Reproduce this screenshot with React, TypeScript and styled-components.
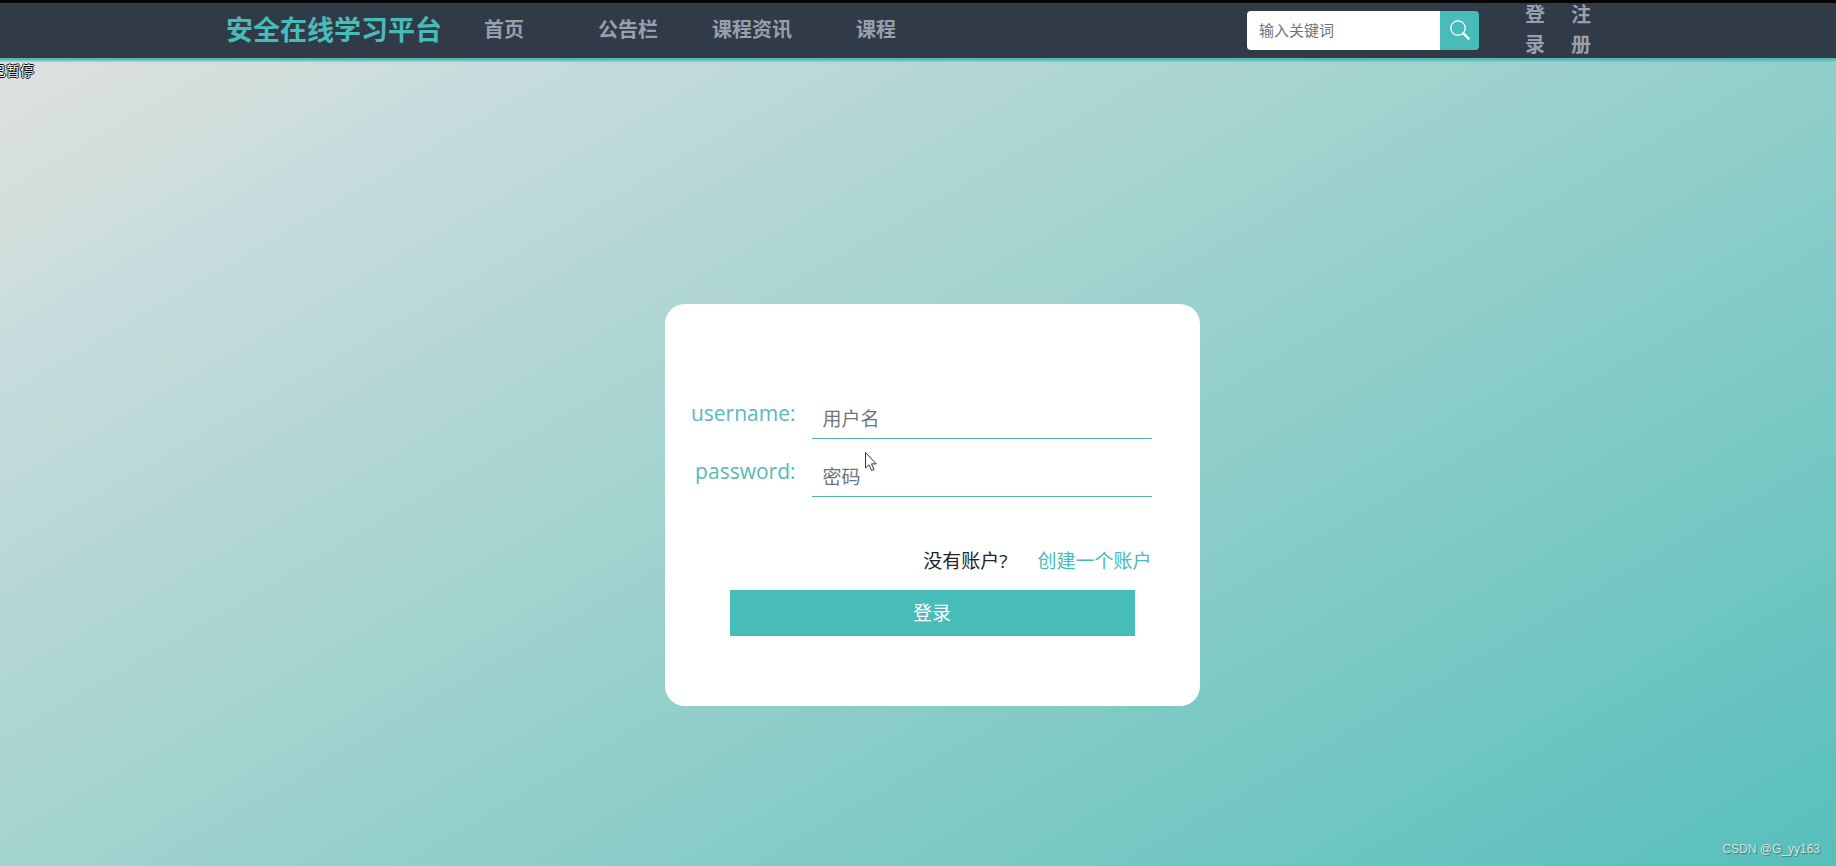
import React from "react";
import styled, { createGlobalStyle } from "styled-components";

const teal = "#48bcb9";

const GlobalStyle = createGlobalStyle`
  *, *::before, *::after { box-sizing: border-box; }
  body {
    margin: 0;
    color: #212529;
    font-family: "Open Sans", "Noto Sans CJK SC", sans-serif;
  }
  a { text-decoration: none; }
  input, button { font-family: inherit; border: 0; border-radius: 0; }
`;

const Page = styled.div`
  position: relative;
  display: flex;
  flex-direction: column;
  min-height: 100vh;
  overflow: hidden;
  background: linear-gradient(150deg, #e3e1de 0%, #cbdddb 16%, #c6dcdd 19%, #c0dad8 24%, #8fcec9 60%, #57bfbc 100%);
`;

const Header = styled.header`
  height: 60px;
  border-top: 3px solid #040404;
  border-bottom: 2px solid #5fb3b1;
  background: #313b47;
  box-shadow: 0 1px 2px ${teal};
`;

const HeaderInner = styled.div`
  display: flex;
  align-items: center;
  height: 100%;
  max-width: 1384px;
  margin: 0 auto;
  padding: 0 19px 1px 0;
`;

const Brand = styled.a`
  flex: none;
  color: ${teal};
  font-size: 27px;
  font-weight: 700;
  line-height: 36px;
`;

const Nav = styled.nav`
  display: grid;
  grid-template-columns: repeat(4, 124px);
`;

const NavLink = styled.a`
  color: #98a0ab;
  font-size: 20px;
  font-weight: 700;
  line-height: 30px;
  text-align: center;
`;

const Search = styled.form`
  display: flex;
  width: 232px;
  height: 39px;
  margin-left: auto;
  overflow: hidden;
  border-radius: 4px;
`;

const SearchInput = styled.input`
  flex: 1;
  min-width: 0;
  padding: 0 12px;
  background: #fff;
  font-size: 15px;
  outline: none;
  &::placeholder { color: #6c757d; opacity: 1; }
`;

const SearchButton = styled.button`
  display: grid;
  place-items: center;
  width: 39px;
  padding: 0;
  background: ${teal};
  color: #fff;
`;

const Account = styled.div`
  display: flex;
  gap: 26px;
  margin-left: 46px;
`;

const AccountLink = styled(NavLink)`
  width: 20px;
`;

const Status = styled.span`
  position: absolute;
  top: 62px;
  left: -8px;
  color: #fff;
  font-size: 14px;
  line-height: 18px;
  text-shadow: -1px 0 #000, 1px 0 #000, 0 -1px #000, 0 1px #000;
`;

const Main = styled.main`
  display: flex;
  flex: 1;
  justify-content: center;
  align-items: flex-start;
  padding: 244px 0 40px 28px;
`;

const Card = styled.form`
  width: 535px;
  padding: 88px 48px 70px 24px;
  border-radius: 20px;
  background: #fff;
`;

const Field = styled.div`
  display: grid;
  grid-template-columns: 107px 1fr;
  column-gap: 16px;
  height: 47px;
  margin-bottom: 11px;
`;

const Label = styled.label`
  color: #58b9b8;
  font-size: 21px;
  line-height: 42px;
  text-align: right;
`;

const TextInput = styled.input`
  width: 100%;
  padding: 8px 11px 0;
  border-bottom: 1px solid #4fb0b2;
  background: transparent;
  font-size: 19px;
  outline: none;
  &::placeholder { color: #6c757d; opacity: 1; }
`;

const SignUp = styled.p`
  display: flex;
  justify-content: flex-end;
  gap: 30px;
  margin: 50px 0 15px;
  font-size: 19px;
  line-height: 28px;
`;

const SignUpLink = styled.a`
  color: ${teal};
`;

const Submit = styled.button`
  display: block;
  width: 405px;
  height: 46px;
  margin-left: 41px;
  background: ${teal};
  color: #fff;
  font-size: 19px;
  line-height: 28px;
`;

const Watermark = styled.span`
  position: absolute;
  right: 16px;
  bottom: 8px;
  color: #d3e5e3;
  font-family: "Liberation Sans", sans-serif;
  font-size: 12px;
  line-height: 18px;
  text-shadow: 1px 1px 1px #3d7775;
`;

const Pointer = styled.svg`
  position: absolute;
  top: 451px;
  left: 864px;
  pointer-events: none;
`;

const navItems = ["首页", "公告栏", "课程资讯", "课程"];

export default function App() {
  return (
    <Page>
      <GlobalStyle />
      <Header>
        <HeaderInner>
          <Brand href="#">安全在线学习平台</Brand>
          <Nav>
            {navItems.map((item) => (
              <NavLink key={item} href="#">{item}</NavLink>
            ))}
          </Nav>
          <Search>
            <SearchInput type="text" placeholder="输入关键词" aria-label="输入关键词" />
            <SearchButton type="button" aria-label="搜索">
              <svg width="20" height="20" viewBox="0 0 20 20" fill="none" stroke="currentColor">
                <circle cx="8" cy="8" r="7.2" strokeWidth="1.3" />
                <path d="M13.4 13.4L18.6 18.6" strokeWidth="2.4" strokeLinecap="round" />
              </svg>
            </SearchButton>
          </Search>
          <Account>
            <AccountLink href="#">登录</AccountLink>
            <AccountLink href="#">注册</AccountLink>
          </Account>
        </HeaderInner>
      </Header>
      <Main>
        <Card>
          <Field>
            <Label htmlFor="username">username:</Label>
            <TextInput id="username" type="text" placeholder="用户名" />
          </Field>
          <Field>
            <Label htmlFor="password">password:</Label>
            <TextInput id="password" type="password" placeholder="密码" />
          </Field>
          <SignUp>
            <span>没有账户?</span>
            <SignUpLink href="#">创建一个账户</SignUpLink>
          </SignUp>
          <Submit type="button">登录</Submit>
        </Card>
      </Main>
      <Status>已暂停</Status>
      <Watermark>CSDN @G_yy163</Watermark>
      <Pointer width="14" height="22" viewBox="0 0 14 22">
        <path
          d="M1.5 1.5V17L5 13.8L7.6 19.6L10 18.5L7.5 12.9H12.2Z"
          fill="#fff"
          stroke="#333"
          strokeWidth="1"
        />
      </Pointer>
    </Page>
  );
}
